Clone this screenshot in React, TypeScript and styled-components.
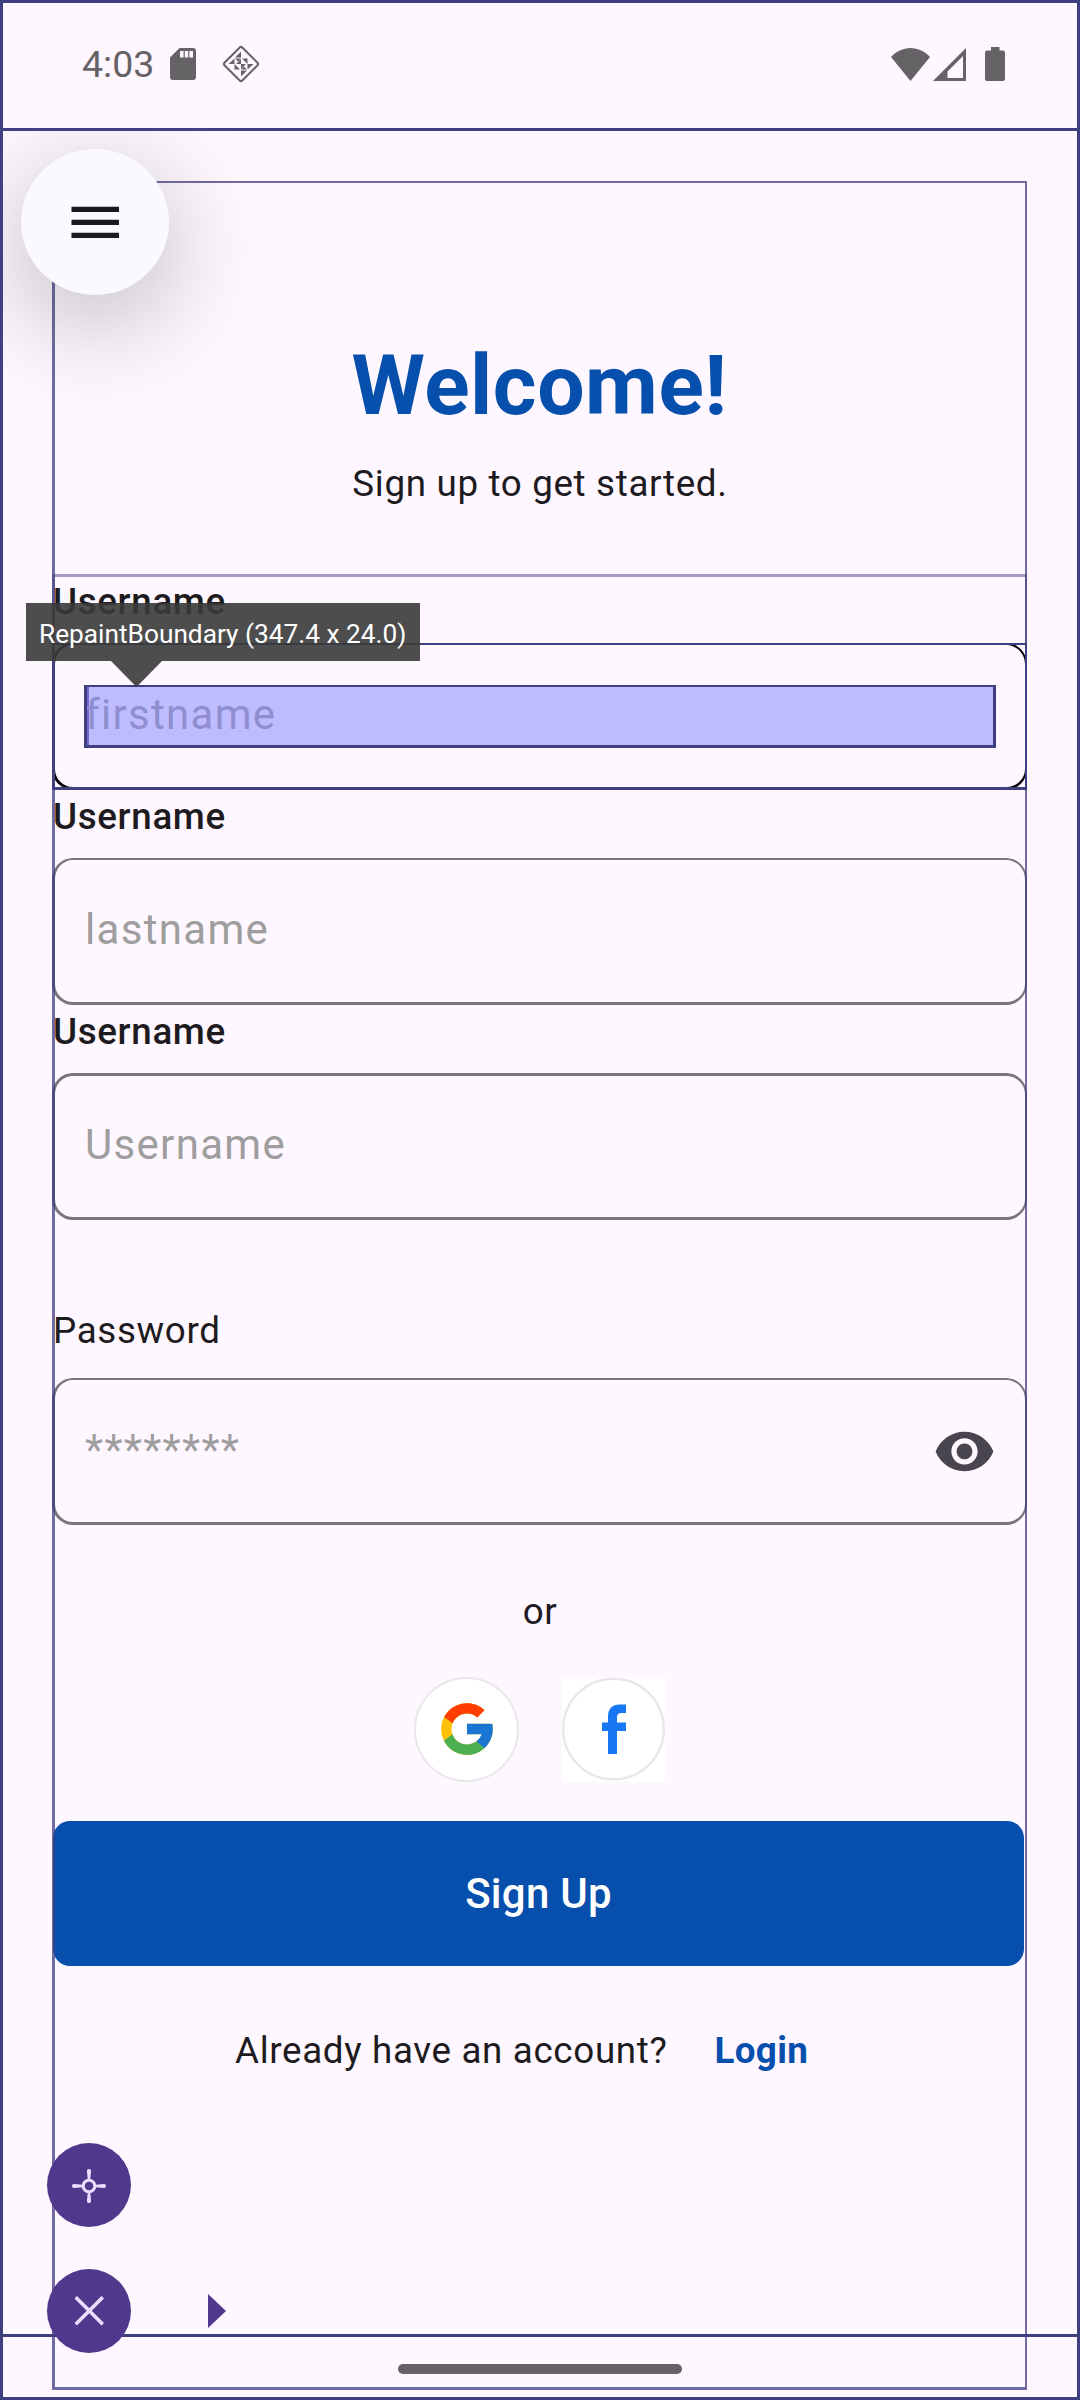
import React from "react";
import styled, { createGlobalStyle } from "styled-components";
import { FcGoogle } from "react-icons/fc";

const ink = "#1d1b20";
const brand = "#064fad";
const guide = "#403f80";
const guideSoft = "rgba(64, 62, 130, 0.75)";
const guideFaint = "rgba(68, 65, 133, 0.5)";
const purple = "#50388c";

const GlobalStyle = createGlobalStyle`
  * { box-sizing: border-box; }
  body { margin: 0; background: #fef7ff; }
  #root { width: 1080px; }
`;

const Screen = styled.div`
  position: relative;
  display: flex;
  flex-direction: column;
  width: 1080px;
  height: 2400px;
  border: 3px solid ${guide};
  background: #fef7ff;
  color: ${ink};
  font-family: Roboto, "Liberation Sans", sans-serif;
  overflow: hidden;
`;

const StatusBar = styled.header`
  display: flex;
  align-items: center;
  justify-content: space-between;
  flex: none;
  height: 128px;
  border-bottom: 3px solid ${guide};
  padding: 0 72px 3px 79px;
  color: #666367;
`;

const StatusGroup = styled.div`
  display: flex;
  align-items: center;
`;

const Clock = styled.span`
  width: 88px;
  font-size: 37.5px;
  line-height: 44px;
  white-space: nowrap;
`;

const StatusIcon = styled.svg<{ $gap?: number }>`
  display: block;
  flex: none;
  margin-left: ${(p) => p.$gap ?? 0}px;
`;

const Main = styled.main`
  display: flex;
  flex-direction: column;
  flex: 1;
  min-height: 0;
  border-bottom: 3px solid ${guide};
  padding: 205px 50px 0 49px;
`;

const Heading = styled.div`
  display: flex;
  flex-direction: column;
  align-items: center;
  gap: 22px;
  height: 239px;
`;

const Title = styled.h1`
  margin: 0;
  color: ${brand};
  font-size: 84px;
  font-weight: 700;
  line-height: 100px;
  letter-spacing: 0.55px;
`;

const Text = styled.p<{ $spacing?: number }>`
  margin: 0;
  font-size: 36.75px;
  line-height: 52px;
  letter-spacing: ${(p) => p.$spacing ?? 0.66}px;
  white-space: nowrap;
`;

const Subtitle = styled(Text)`
  padding-left: 1px;
`;

const FieldGroup = styled.div<{ $top?: number }>`
  display: flex;
  flex-direction: column;
  margin-top: ${(p) => p.$top ?? 0}px;
`;

const Label = styled.label<{ $weight: number; $height: number }>`
  height: ${(p) => p.$height}px;
  padding: 1px 0 0 1px;
  font-size: 36.75px;
  font-weight: ${(p) => p.$weight};
  line-height: 52px;
  letter-spacing: 0.66px;
`;

const Field = styled.div<{ $active?: boolean; $top?: number }>`
  display: flex;
  align-items: center;
  justify-content: space-between;
  height: 147px;
  border: 3px solid ${(p) => (p.$active ? "#000" : "#7a747c")};
  border-top-width: ${(p) => p.$top ?? 2}px;
  border-right-width: 2px;
  border-radius: 21px;
  padding: 0 29px 4px 30px;
`;

const Hint = styled.span`
  color: #9e9e9e;
  font-size: 42px;
  line-height: 63px;
  letter-spacing: 1.31px;
`;

const Caret = styled.i`
  width: 4px;
  height: 58px;
  margin: 4px -4px 0 0;
  background: #6750a4;
`;

const HintRow = styled.div`
  display: flex;
  align-items: center;
`;

const Divider = styled(Text)`
  margin-top: 61px;
  padding-left: 1px;
  text-align: center;
`;

const SocialRow = styled.div`
  display: flex;
  justify-content: center;
  gap: 43px;
  height: 105px;
  margin: 39px 0;
`;

const GoogleButton = styled.div`
  display: grid;
  place-items: center;
  width: 105px;
  height: 105px;
  border: 2.5px solid #e9e7ea;
  border-radius: 50%;
  padding-bottom: 1px;
  background: #fff;
`;

const FacebookTile = styled.div`
  width: 103px;
  height: 105px;
  background: #fff;
`;

const SignUp = styled.button`
  width: 971px;
  height: 145px;
  margin-left: 1px;
  border: 0;
  border-radius: 17px;
  padding: 0;
  background: ${brand};
  color: #fff;
  font: 500 42px/60px Roboto, "Liberation Sans", sans-serif;
  letter-spacing: 0.26px;
`;

const LoginRow = styled.div`
  display: flex;
  gap: 47px;
  margin-top: 59px;
  padding-left: 183px;
`;

const LoginLink = styled.a`
  color: ${brand};
  font-size: 36.75px;
  font-weight: 700;
  line-height: 52px;
  letter-spacing: 0.35px;
`;

const NavBar = styled.footer`
  display: flex;
  justify-content: center;
  flex: none;
  height: 60px;
  padding-top: 27px;
`;

const NavPill = styled.div`
  width: 284px;
  height: 10px;
  border-radius: 5px;
  background: #666367;
`;

const Overlay = styled.div`
  position: absolute;
  inset: -3px;
  pointer-events: none;
`;

const Guide = styled.div<{
  $x: number; $y: number; $w: number; $h: number; $edges: string; $color: string; $fill?: string;
}>`
  position: absolute;
  left: ${(p) => p.$x}px;
  top: ${(p) => p.$y}px;
  width: ${(p) => p.$w}px;
  height: ${(p) => p.$h}px;
  border-style: solid;
  border-width: ${(p) => p.$edges};
  border-color: ${(p) => p.$color};
  background: ${(p) => p.$fill ?? "none"};
  background-clip: padding-box;
`;

const Tooltip = styled.div`
  position: absolute;
  left: 26px;
  top: 603px;
  width: 394px;
  height: 58px;
  padding: 0 13px;
  background: rgba(58, 58, 58, 0.9);
  color: #fff;
  font-size: 26.25px;
  line-height: 62px;
  white-space: nowrap;

  &::after {
    content: "";
    position: absolute;
    left: 85px;
    top: 58px;
    width: 51px;
    height: 26px;
    background: rgba(58, 58, 58, 0.9);
    clip-path: polygon(0 0, 100% 0, 50% 100%);
  }
`;

const MenuArea = styled.div`
  position: absolute;
  left: 3px;
  top: 131px;
  width: 500px;
  height: 420px;
  overflow: hidden;
`;

const MenuButton = styled.div`
  display: grid;
  place-items: center;
  width: 148px;
  height: 146px;
  margin: 18px 0 0 18px;
  border-radius: 50%;
  padding-top: 2px;
  background: #f9f9ff;
  box-shadow: 0 26px 105px rgba(0, 0, 0, 0.27);
`;

const ToolStack = styled.div`
  position: absolute;
  left: 47px;
  top: 2143px;
  display: flex;
  flex-direction: column;
  gap: 42px;
`;

const ToolRow = styled.div`
  display: flex;
  align-items: center;
  gap: 77px;
`;

const ToolButton = styled.div`
  display: grid;
  place-items: center;
  width: 84px;
  height: 84px;
  border-radius: 50%;
  background: ${purple};
`;

const RightArrow = styled.div`
  width: 18px;
  height: 34px;
  background: ${purple};
  clip-path: polygon(0 0, 100% 50%, 0 100%);
`;

const nameFields = [
  { label: "Username", hint: "firstname", active: true, top: 2 },
  { label: "Username", hint: "lastname", active: false, top: 2 },
  { label: "Username", hint: "Username", active: false, top: 3 },
];

export default function App() {
  return (
    <>
      <GlobalStyle />
      <Screen>
        <StatusBar>
          <StatusGroup>
            <Clock>4:03</Clock>
            <StatusIcon width="26" height="32" viewBox="0 0 26 32">
              <path fill="currentColor" fillRule="evenodd" d="M9.5 0H23a3 3 0 0 1 3 3v26a3 3 0 0 1-3 3H3a3 3 0 0 1-3-3V9.500zM10 3v6.500h3.600V3zM14.800 3v6.500h3.400V3zM19.400 3v6.500H23V3z" />
            </StatusIcon>
            <StatusIcon $gap={26} width="38" height="38" viewBox="-19 -19 38 38">
              <rect x="-12.600" y="-12.600" width="25.200" height="25.200" rx="1.800" fill="none" stroke="currentColor" strokeWidth="2" transform="rotate(45)" />
              <g fill="currentColor">
                {[0, 180].map((a) => (
                  <g key={a} transform={`rotate(${a})`}>
                    <path d="M0-12.500V-6.500H-6zM-12.500 0L-6.500-5.500V0zM-6-5.500H0L-3-2.500zM0-5V0H-5zM1-5.500H6.500V0z" />
                  </g>
                ))}
              </g>
            </StatusIcon>
          </StatusGroup>
          <StatusGroup>
            <StatusIcon width="39" height="33" viewBox="0 0 39 33">
              <path fill="currentColor" d="M0 9C5 3.500 12 0 19.500 0S34 3.500 39 9L19.500 33z" />
            </StatusIcon>
            <StatusIcon $gap={3} width="33" height="33" viewBox="0 0 33 33">
              <path fill="currentColor" fillRule="evenodd" d="M33 0V33H0zM30 8L14.500 23.500V30H30z" />
            </StatusIcon>
            <StatusIcon $gap={19} width="20" height="34" viewBox="0 0 20 34">
              <path fill="currentColor" d="M6 0h8.500v3.500H18a2 2 0 0 1 2 2V32a2 2 0 0 1-2 2H2a2 2 0 0 1-2-2V5.500a2 2 0 0 1 2-2h4z" />
            </StatusIcon>
          </StatusGroup>
        </StatusBar>

        <Main>
          <Heading>
            <Title>Welcome!</Title>
            <Subtitle>Sign up to get started.</Subtitle>
          </Heading>

          {nameFields.map((f) => (
            <FieldGroup key={f.hint}>
              <Label $weight={500} $height={68}>{f.label}</Label>
              <Field $active={f.active} $top={f.top}>
                <HintRow>
                  {f.active && <Caret />}
                  <Hint>{f.hint}</Hint>
                </HintRow>
              </Field>
            </FieldGroup>
          ))}

          <FieldGroup $top={84}>
            <Label $weight={400} $height={74}>Password</Label>
            <Field>
              <Hint>********</Hint>
              <StatusIcon width="63" height="63" viewBox="0 0 24 24">
                <path fill="#49454f" transform="translate(0 .75)" d="M12 4.500C7 4.500 2.730 7.610 1 12c1.730 4.390 6 7.500 11 7.500s9.270-3.110 11-7.500c-1.730-4.390-6-7.500-11-7.500zM12 17c-2.760 0-5-2.240-5-5s2.240-5 5-5 5 2.240 5 5-2.240 5-5 5zm0-8c-1.660 0-3 1.340-3 3s1.340 3 3 3 3-1.340 3-3-1.340-3-3-3z" />
              </StatusIcon>
            </Field>
          </FieldGroup>

          <Divider>or</Divider>
          <SocialRow>
            <GoogleButton>
              <FcGoogle size={62} />
            </GoogleButton>
            <FacebookTile>
              <svg width="103" height="105" viewBox="0 0 103 105">
                <circle cx="51.500" cy="52" r="50.300" fill="#fff" stroke="#e9e7ea" strokeWidth="2.500" />
                <path fill="#1877f2" d="M46 77V54H40V45.500H46V39.500C46 31.500 50.500 27.500 57.500 27.500H64V36H59.500C56.500 36 55 37.500 55 40V45.500H64V54H55V77z" />
              </svg>
            </FacebookTile>
          </SocialRow>
          <SignUp>Sign Up</SignUp>
          <LoginRow>
            <Text>Already have an account?</Text>
            <LoginLink>Login</LoginLink>
          </LoginRow>
        </Main>

        <NavBar>
          <NavPill />
        </NavBar>

        <Overlay>
          <Guide $x={52} $y={574} $w={975} $h={69} $edges="3px 2px 0 3px" $color={guideFaint} />
          <Guide $x={52} $y={181} $w={975} $h={2209} $edges="2px 2px 3px 3px" $color={guideSoft} />
          <Guide $x={52} $y={643} $w={975} $h={147} $edges="2px 2px 3px 3px" $color={guide} />
          <Guide $x={84} $y={685} $w={912} $h={63} $edges="2px 3px 3px 3px" $color={guide} $fill="rgba(128, 128, 255, 0.5)" />
          <MenuArea>
            <MenuButton>
              <svg width="48" height="34" viewBox="0 0 48 34">
                <path fill="#1a1a20" d="M.5.700H48V6H.5zM.5 13.700H48V19H.5zM.5 26.700H48V32H.5z" />
              </svg>
            </MenuButton>
          </MenuArea>
          <Tooltip>RepaintBoundary (347.4 x 24.0)</Tooltip>
          <ToolStack>
            <ToolRow>
              <ToolButton>
                <svg width="36" height="36" viewBox="-18 -19 36 36">
                  <circle r="5.800" fill="none" stroke="#eaddff" strokeWidth="3" />
                  {[0, 90, 180, 270].map((a) => (
                    <path key={a} transform={`rotate(${a})`} fill="#eaddff" d="M-2.100-15A2.100 2.100 0 0 1 2.100-15L1.200-6H-1.200z" />
                  ))}
                </svg>
              </ToolButton>
            </ToolRow>
            <ToolRow>
              <ToolButton>
                <svg width="30" height="30" viewBox="-15 -15 30 30">
                  <path d="M-12-12.500L12.500 12M12.500-12.500L-12 12" stroke="#eaddff" strokeWidth="3.600" strokeLinecap="square" />
                </svg>
              </ToolButton>
              <RightArrow />
            </ToolRow>
          </ToolStack>
        </Overlay>
      </Screen>
    </>
  );
}
